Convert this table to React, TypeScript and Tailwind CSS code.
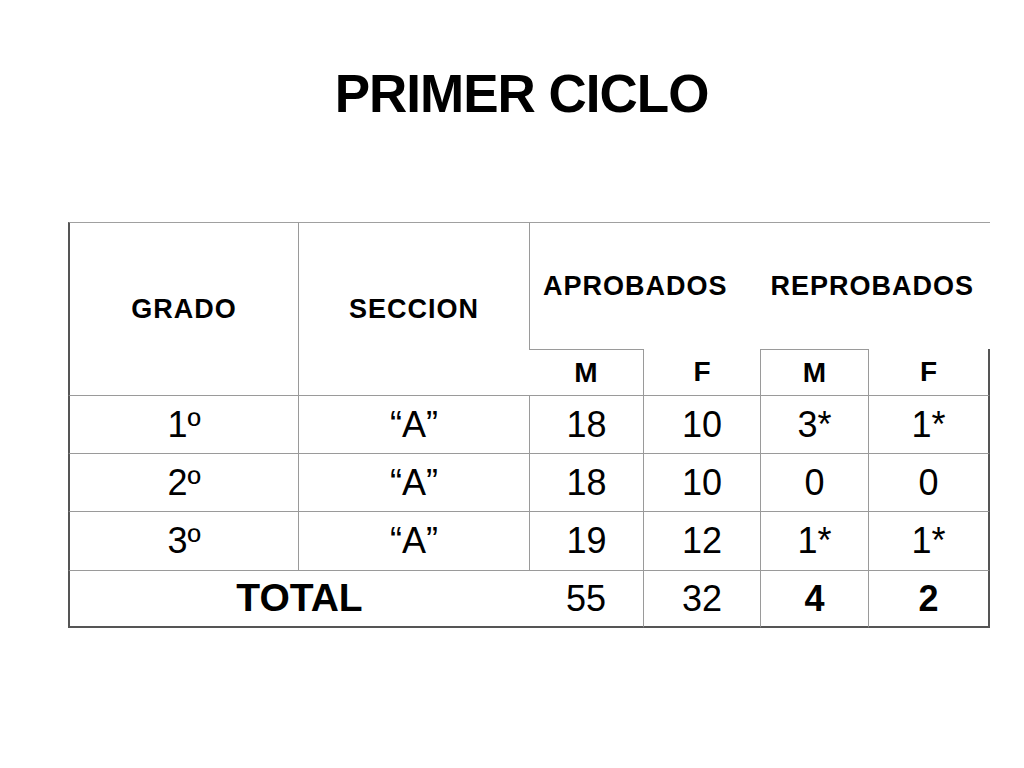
const font = { fontFamily: '"Liberation Sans", Arial, sans-serif' };

type Row = { grado: string; seccion: string; am: string; af: string; rm: string; rf: string };

const rows: Row[] = [
  { grado: "1º", seccion: "“A”", am: "18", af: "10", rm: "3*", rf: "1*" },
  { grado: "2º", seccion: "“A”", am: "18", af: "10", rm: "0", rf: "0" },
  { grado: "3º", seccion: "“A”", am: "19", af: "12", rm: "1*", rf: "1*" },
];

const cell = "flex items-center justify-center text-black";
const inner = "border-[#9a9a9a]";

export default function App() {
  return (
    <div className="min-h-screen w-full bg-white" style={font}>
      <div className="pt-[67px] pl-[19px] text-center">
        <h1 className="text-[53px] font-bold leading-none tracking-[-1px] text-black">PRIMER CICLO</h1>
      </div>

      <div className="ml-[68px] mt-[102px] grid w-[922px] grid-cols-[230px_231px_114px_117px_108px_122px] grid-rows-[127px_46px_58px_58px_59px_58px]">
        {/* header */}
        <div className={`${cell} row-span-2 border-t border-l-2 border-t-[#a0a0a0] border-l-[#555] text-[27px] font-bold tracking-[1px]`}>
          GRADO
        </div>
        <div className={`${cell} row-span-2 border-t border-l ${inner} border-t-[#a0a0a0] text-[27px] font-bold tracking-[1px]`}>
          SECCION
        </div>
        <div className={`col-span-4 flex items-center border-t border-l ${inner} border-t-[#a0a0a0] text-[27px] font-bold tracking-[1px]`}>
          <div className="flex w-[231px] justify-center pr-[20px]">APROBADOS</div>
          <div className="flex w-[230px] justify-center pr-[6px]">REPROBADOS</div>
        </div>

        <div className={`${cell} border-t ${inner} text-[28px] font-bold`}>M</div>
        <div className={`${cell} border-l ${inner} text-[28px] font-bold`}>F</div>
        <div className={`${cell} border-t border-l ${inner} text-[28px] font-bold`}>M</div>
        <div className={`${cell} border-l border-r-2 ${inner} border-r-[#555] text-[28px] font-bold`}>F</div>

        {/* data rows */}
        {rows.map((r) => (
          <div key={r.grado} className="contents">
            <div className={`${cell} border-t border-l-2 ${inner} border-l-[#555] text-[36px]`}>{r.grado}</div>
            <div className={`${cell} border-t border-l ${inner} text-[36px]`}>{r.seccion}</div>
            <div className={`${cell} border-t border-l ${inner} text-[36px]`}>{r.am}</div>
            <div className={`${cell} border-t border-l ${inner} text-[36px]`}>{r.af}</div>
            <div className={`${cell} border-t border-l ${inner} text-[36px]`}>{r.rm}</div>
            <div className={`${cell} border-t border-l border-r-2 ${inner} border-r-[#555] text-[36px]`}>{r.rf}</div>
          </div>
        ))}

        {/* total */}
        <div className={`${cell} col-span-2 border-t border-l-2 border-b-2 ${inner} border-l-[#555] border-b-[#555] text-[39px] font-bold`}>
          TOTAL
        </div>
        <div className={`${cell} border-t border-b-2 ${inner} border-b-[#555] text-[36px]`}>55</div>
        <div className={`${cell} border-t border-l border-b-2 ${inner} border-b-[#555] text-[36px]`}>32</div>
        <div className={`${cell} border-t border-l border-b-2 ${inner} border-b-[#555] text-[36px] font-bold`}>4</div>
        <div className={`${cell} border-t border-l border-r-2 border-b-2 ${inner} border-r-[#555] border-b-[#555] text-[36px] font-bold`}>2</div>
      </div>
    </div>
  );
}
